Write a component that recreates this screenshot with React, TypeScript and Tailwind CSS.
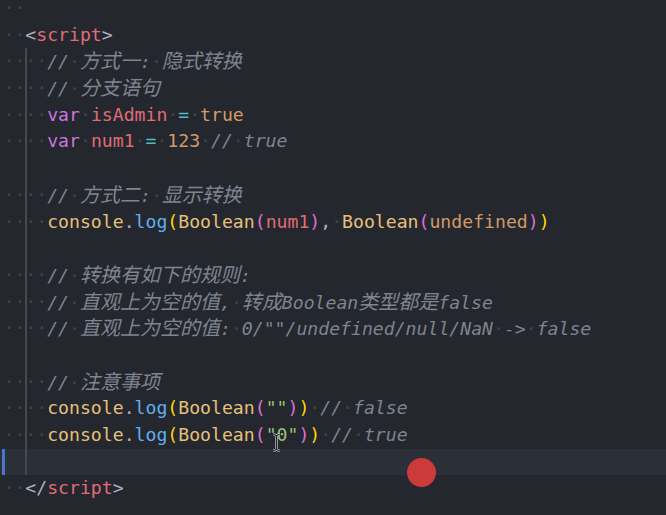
type Tok = [string, string?];

const KIND: Record<string, string> = {
  p: "text-[#abb2bf]",
  t: "text-[#e06c75]",
  c: "text-[#7f848e] italic",
  k: "text-[#c678dd]",
  v: "text-[#e06c75]",
  o: "text-[#56b6c2]",
  n: "text-[#d19a66]",
  y: "text-[#e5c07b]",
  f: "text-[#61afef]",
  b1: "text-[#ffd700]",
  b2: "text-[#da70d6]",
  s: "text-[#98c379]",
};

const SP: Tok = ["    "];

const lines: Tok[][] = [
  [["  "]],
  [["  "], ["<", "p"], ["script", "t"], [">", "p"]],
  [SP, ["// 方式一: 隐式转换", "c"]],
  [SP, ["// 分支语句", "c"]],
  [SP, ["var", "k"], [" "], ["isAdmin", "v"], [" "], ["=", "o"], [" "], ["true", "n"]],
  [SP, ["var", "k"], [" "], ["num1", "v"], [" "], ["=", "o"], [" "], ["123", "n"], [" "], ["// true", "c"]],
  [],
  [SP, ["// 方式二: 显示转换", "c"]],
  [
    SP,
    ["console", "y"], [".", "p"], ["log", "f"], ["(", "b1"], ["Boolean", "y"], ["(", "b2"], ["num1", "v"], [")", "b2"],
    [",", "p"], [" "], ["Boolean", "y"], ["(", "b2"], ["undefined", "n"], [")", "b2"], [")", "b1"],
  ],
  [],
  [SP, ["// 转换有如下的规则:", "c"]],
  [SP, ["// 直观上为空的值, 转成Boolean类型都是false", "c"]],
  [SP, ["// 直观上为空的值: 0/\"\"/undefined/null/NaN -> false", "c"]],
  [],
  [SP, ["// 注意事项", "c"]],
  [
    SP,
    ["console", "y"], [".", "p"], ["log", "f"], ["(", "b1"], ["Boolean", "y"], ["(", "b2"], ["\"\"", "s"], [")", "b2"],
    [")", "b1"], [" "], ["// false", "c"],
  ],
  [
    SP,
    ["console", "y"], [".", "p"], ["log", "f"], ["(", "b1"], ["Boolean", "y"], ["(", "b2"], ["\"0\"", "s"], [")", "b2"],
    [")", "b1"], [" "], ["// true", "c"],
  ],
  [],
  [["  "], ["</", "p"], ["script", "t"], [">", "p"]],
];

const CJK = /([\u3000-\u303f\u4e00-\u9fff\uff00-\uffef]+)/;

// spaces shown as dim dots, CJK runs a bit larger like the editor fallback
function Piece({ text }: { text: string }) {
  return (
    <>
      {text.split(/( +)/).map((part, i) => {
        if (!part) return null;
        if (part[0] === " ")
          return (
            <span key={i} className="text-[#3e424a] not-italic">
              {"·".repeat(part.length)}
            </span>
          );
        return part.split(CJK).map((seg, j) =>
          CJK.test(seg) ? (
            <span key={`${i}-${j}`} className="text-[20px] font-['Noto_Sans_CJK_SC',sans-serif]">
              {seg}
            </span>
          ) : (
            <span key={`${i}-${j}`}>{seg}</span>
          )
        );
      })}
    </>
  );
}

export default function App() {
  return (
    <div className="relative h-[515px] w-[666px] overflow-hidden bg-[#24272e] font-['DejaVu_Sans_Mono','Noto_Sans_CJK_SC',monospace] text-[18.15px]">
      <div className="-mt-[5px] flex flex-col">
        {lines.map((toks, i) => (
          <div
            key={i}
            className={
              i === 17
                ? "flex h-[26.7px] items-center whitespace-pre bg-[#2b2f37] pl-[3.5px] leading-[26.7px]"
                : "flex h-[26.7px] items-center whitespace-pre pl-[3.5px] leading-[26.7px]"
            }
          >
            {i === 17 && <span className="-ml-[2px] h-full w-[3px] bg-[#4a74c9]" />}
            {toks.map(([text, kind], j) => (
              <span key={j} className={kind ? KIND[kind] : ""}>
                <Piece text={text} />
              </span>
            ))}
          </div>
        ))}
      </div>

      {/* indent guide */}
      <div className="absolute left-[25px] top-[48px] h-[427px] w-[2px] bg-[#44484f]" />

      {/* click marker */}
      <div className="absolute left-[407px] top-[458px] h-[29px] w-[29px] rounded-full bg-[#cc3a3a]" />

      {/* mouse I-beam */}
      <svg className="absolute left-[272px] top-[433px]" width="9" height="19" viewBox="0 0 9 19" fill="none">
        <path d="M1.5 1.5 Q4.5 1.5 4.5 4 V15 Q4.5 17.5 1.5 17.5 M7.5 1.5 Q4.5 1.5 4.5 4 M7.5 17.5 Q4.5 17.5 4.5 15" stroke="#cfd2d6" strokeWidth="2.4" />
        <path d="M1.5 1.5 Q4.5 1.5 4.5 4 V15 Q4.5 17.5 1.5 17.5 M7.5 1.5 Q4.5 1.5 4.5 4 M7.5 17.5 Q4.5 17.5 4.5 15" stroke="#1d1f23" strokeWidth="1.1" />
      </svg>
    </div>
  );
}
